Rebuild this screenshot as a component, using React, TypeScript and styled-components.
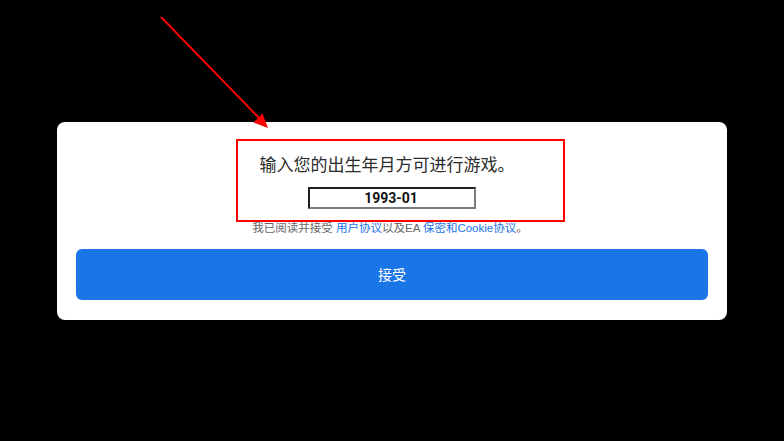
import React from "react";
import styled, { createGlobalStyle } from "styled-components";

const GlobalStyle = createGlobalStyle`
  html, body { margin: 0; padding: 0; background: #000; }
  body { font-family: "Noto Sans CJK SC", "Noto Sans", sans-serif; }
  * { box-sizing: border-box; }
`;

const Page = styled.div`
  position: relative;
  width: 784px;
  height: 441px;
  background: #000;
  display: flex;
  align-items: center;
  justify-content: center;
  overflow: hidden;
`;

const Card = styled.div`
  width: 670px;
  height: 198px;
  background: #fff;
  border-radius: 8px;
  padding: 30px 19px 20px;
  display: flex;
  flex-direction: column;
  align-items: center;
`;

const Title = styled.div`
  font-family: "Noto Sans CJK SC", sans-serif;
  font-size: 17px;
  line-height: 24px;
  color: #2b2b2b;
  margin-left: -10px;
`;

const DateBox = styled.div`
  margin-top: 11px;
  width: 168px;
  height: 22px;
  border-width: 2px;
  border-style: solid;
  border-color: #1e1e1e #7a7a7a #7a7a7a #1e1e1e;
  display: flex;
  align-items: center;
  justify-content: center;
  font-family: Roboto, "Noto Sans", sans-serif;
  font-weight: 700;
  font-size: 14px;
  color: #111;
  padding-right: 2px;
`;

const Consent = styled.div`
  margin-top: 11px;
  font-family: "Liberation Sans", "Noto Sans CJK SC", sans-serif;
  font-size: 11.5px;
  line-height: 16px;
  color: #666;
  margin-left: -4px;
`;

const Link = styled.span`
  color: #1a73e8;
`;

const AcceptButton = styled.button`
  margin-top: 13px;
  width: 100%;
  height: 51px;
  border: none;
  border-radius: 6px;
  background: #1a75e7;
  color: #fff;
  font-family: "Noto Sans CJK SC", sans-serif;
  font-size: 14px;
  padding: 0;
  cursor: pointer;
`;

const Highlight = styled.div`
  position: absolute;
  left: 236px;
  top: 139px;
  width: 329px;
  height: 83px;
  border: 2px solid #f00;
  pointer-events: none;
`;

const ArrowSvg = styled.svg`
  position: absolute;
  left: 0;
  top: 0;
  pointer-events: none;
`;

export default function App() {
  return (
    <>
      <GlobalStyle />
      <Page>
        <Card>
          <Title>输入您的出生年月方可进行游戏。</Title>
          <DateBox>1993-01</DateBox>
          <Consent>
            我已阅读并接受 <Link>用户协议</Link>以及EA <Link>保密和Cookie协议</Link>。
          </Consent>
          <AcceptButton>接受</AcceptButton>
        </Card>
        <Highlight />
        <ArrowSvg width="784" height="441" viewBox="0 0 784 441">
          <line x1="161" y1="17" x2="259" y2="118" stroke="#f00" strokeWidth="2" />
          <polygon points="268,128 253.5,122.5 262.5,113.5" fill="#f00" />
        </ArrowSvg>
      </Page>
    </>
  );
}
